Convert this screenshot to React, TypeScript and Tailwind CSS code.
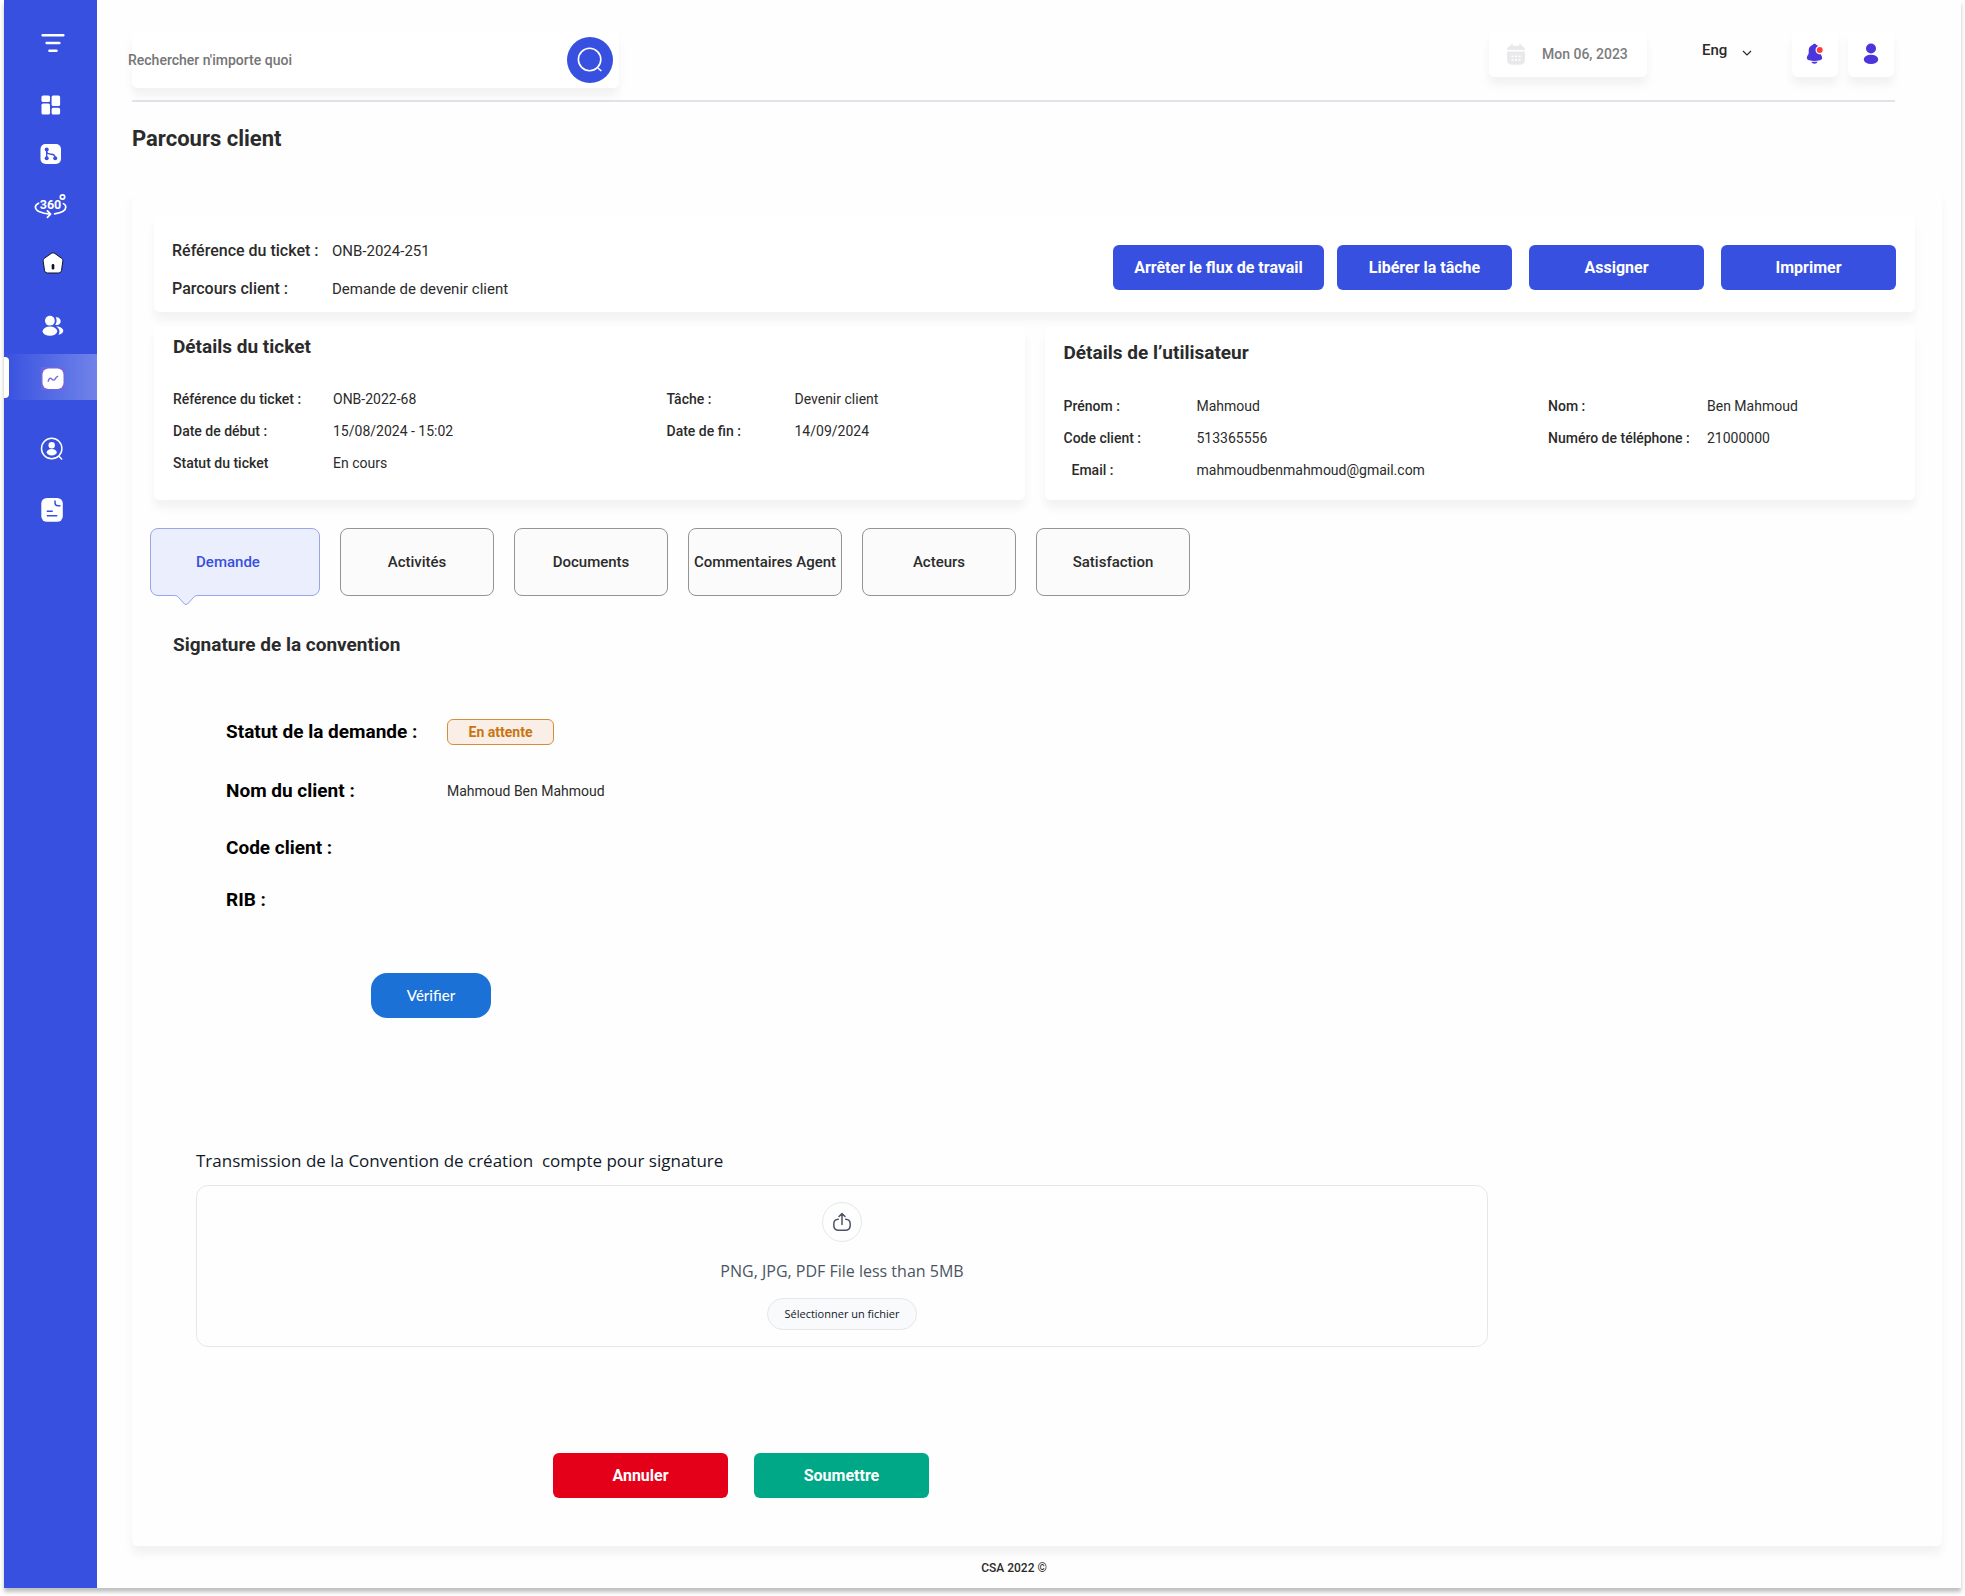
import type { ReactNode } from "react"
import clsx from "clsx"

const cardShadow = "shadow-[0_8px_10px_rgba(0,0,0,0.05)]"

interface Field {
  label: string
  value: string
  indent?: boolean
}

const ticketFields: Field[][] = [
  [
    { label: "Référence du ticket :", value: "ONB-2022-68" },
    { label: "Date de début :", value: "15/08/2024 - 15:02" },
    { label: "Statut du ticket", value: "En cours" },
  ],
  [
    { label: "Tâche :", value: "Devenir client" },
    { label: "Date de fin :", value: "14/09/2024" },
  ],
]

const userFields: Field[][] = [
  [
    { label: "Prénom :", value: "Mahmoud" },
    { label: "Code client :", value: "513365556" },
    { label: "Email :", value: "mahmoudbenmahmoud@gmail.com", indent: true },
  ],
  [
    { label: "Nom :", value: "Ben Mahmoud" },
    { label: "Numéro de téléphone :", value: "21000000" },
  ],
]

const tabs = ["Activités", "Documents", "Commentaires Agent", "Acteurs", "Satisfaction"]

function MenuIcon() {
  return (
    <svg width="24" height="20" viewBox="0 0 24 20" stroke="white" strokeWidth="2.4" strokeLinecap="round">
      <path d="M1.6 2.2h20.8M5.6 10h12.8M8.4 17.8h7.2" />
    </svg>
  )
}

function DashboardIcon() {
  return (
    <svg width="20" height="20" viewBox="0 0 20 20" fill="white">
      <rect x="0.5" y="0.5" width="8.5" height="6.5" rx="1.6" />
      <rect x="0.5" y="8.6" width="8.5" height="10.9" rx="1.6" />
      <rect x="10.6" y="0.5" width="8.5" height="10.6" rx="1.6" />
      <rect x="10.6" y="12.8" width="8.5" height="6.7" rx="1.6" />
    </svg>
  )
}

function FlowIcon() {
  return (
    <svg width="22" height="22" viewBox="0 0 22 22" fill="none">
      <rect x="0.5" y="1" width="20.5" height="20" rx="5" fill="white" />
      <path d="M6.7 6v9M6.7 7.5c0 3.5 2 3.7 4.5 3.7 2.8 0 4 1 4 4" stroke="#3850e0" strokeWidth="1.4" />
      <circle cx="6.7" cy="6.6" r="2" fill="#3850e0" />
      <circle cx="6.7" cy="15.2" r="2" fill="#3850e0" />
      <circle cx="15.2" cy="15.2" r="2" fill="#3850e0" />
    </svg>
  )
}

function RotateIcon() {
  return (
    <svg width="34" height="26" viewBox="0 0 34 26" fill="none" stroke="white" strokeWidth="1.7" strokeLinecap="round" strokeLinejoin="round">
      <path d="M4.6 10.2C2.4 11.3 1.4 12.5 1.4 14c0 3.8 6.3 6.7 14.2 7.1M13.4 17.9l3.2 3.3-3.2 3.2M29.5 10.6c1.6 1 2.3 2.1 2.3 3.4 0 3.3-4.8 5.9-11.2 6.8" />
      <circle cx="28.5" cy="4" r="2.2" />
      <text x="16.5" y="15.5" textAnchor="middle" fontSize="12.5" fontWeight="700" fill="white" stroke="none">
        360
      </text>
    </svg>
  )
}

function HomeIcon() {
  return (
    <svg width="22" height="22" viewBox="0 0 22 22">
      <path
        d="M9.2 1.4a3 3 0 0 1 3.6 0l6.7 4.800c1 .7 1.500 1.900 1.300 3l-1.300 9.300a3 3 0 0 1-3 2.500H5.500a3 3 0 0 1-3-2.500L1.200 9.200c-.2-1.100.3-2.300 1.300-3z"
        fill="white"
        stroke="#11131c"
        strokeWidth="1"
      />
      <rect x="9.7" y="12" width="2.6" height="5.5" rx="1.2" fill="#11131c" />
    </svg>
  )
}

function UsersIcon() {
  return (
    <svg width="22" height="22" viewBox="0 0 22 22" fill="white">
      <circle cx="7.9" cy="5.7" r="4.9" />
      <ellipse cx="7.9" cy="16.2" rx="7.3" ry="4.6" />
      <path d="M13.2 9.7c.9-1.1 1.4-2.500 1.400-4 0-1.300-.3-2.400-.9-3.400 2.700-.6 5 1.200 5 3.900s-2.600 4.500-5.500 3.500zM14 11.400c3.900-.2 7.300 1.900 7.300 4.400 0 2-1.900 3.600-5 4 2-2.500 1.600-6.300-2.300-8.400z" />
    </svg>
  )
}

function ActivityIcon() {
  return (
    <svg width="24" height="24" viewBox="0 0 24 24" fill="none">
      <rect width="24" height="23" fill="#7166e0" />
      <rect x="1.5" y="1.5" width="21" height="20.5" rx="6" fill="white" />
      <path d="M7 14.8c1.2-4 2.3-4.3 3.6-2.800 1.700 1.900 2.900 1.500 3.900-.6.5-1 1.100-1.900 2.700-2.300" stroke="#7166e0" strokeWidth="1.3" />
    </svg>
  )
}

function UserSearchIcon() {
  return (
    <svg width="24" height="24" viewBox="0 0 24 24" fill="white">
      <circle cx="11.7" cy="11.5" r="10.2" fill="none" stroke="white" strokeWidth="1.5" />
      <path d="M18.7 19l3.4 3.5" stroke="white" strokeWidth="1.5" />
      <circle cx="11.7" cy="8.3" r="3.2" />
      <ellipse cx="11.7" cy="15.2" rx="5" ry="3.2" />
    </svg>
  )
}

function DocumentIcon() {
  return (
    <svg width="24" height="24" viewBox="0 0 24 24" fill="none">
      <rect x="1.3" width="21.5" height="23.8" rx="5.5" fill="white" />
      <path d="M15 2.500v2.300c0 2 1 3 3 3h2.500M6.800 13.200h6M6.800 17.700h10.500" stroke="#3850e0" strokeWidth="1.5" />
    </svg>
  )
}

function CalendarIcon() {
  return (
    <svg width="18" height="22" viewBox="0 0 18 22" fill="#e9e9ec">
      <path d="M0 7c.3-2.700 2-4 4-4.200V1.300a.9.900 0 0 1 1.800 0v1.400h6.400V1.300a.9.900 0 0 1 1.800 0v1.500c2 .2 3.700 1.500 4 4.200z" />
      <path d="M0 8.500h18v8.300c0 3-1.800 5-5 5H5c-3.200 0-5-2-5-5z" />
      <path d="M4.500 13.300h2M8 13.300h2M11.500 13.300h2M4.500 17h2M8 17h2M11.500 17h2" stroke="white" strokeWidth="1.7" />
    </svg>
  )
}

function BellIcon() {
  return (
    <svg width="18" height="22" viewBox="0 0 18 22" fill="#4b35dc">
      <path d="M8.500.7c.9 0 1.400.5 1.600 1.100 2.800.9 4.200 3 4.200 5.700v2.800c0 1.500 1.900 2.500 1.900 4.500 0 1.700-1.200 2.200-2.500 2.500-3.200.8-7.200.8-10.400 0-1.300-.3-2.500-.8-2.500-2.500 0-2 1.900-3 1.900-4.500V7.500c0-2.700 1.400-4.800 4.200-5.700.2-.6.700-1.100 1.600-1.100z" />
      <path d="M5.300 18.800h6.400c-.6 1.300-1.700 2-3.200 2s-2.600-.7-3.200-2z" />
      <circle cx="13.7" cy="7" r="3.6" fill="#ff3b3b" stroke="white" strokeWidth="1.2" />
    </svg>
  )
}

function UserIcon() {
  return (
    <svg width="16" height="22" viewBox="0 0 16 22" fill="#4b35dc">
      <circle cx="8" cy="5.5" r="5" />
      <ellipse cx="8" cy="16.4" rx="7.2" ry="4.7" />
    </svg>
  )
}

function NavLink({ label, className, children }: { label: string; className: string; children: ReactNode }) {
  return (
    <a href="#" aria-label={label} className={clsx("flex w-full items-center justify-center", className)}>
      {children}
    </a>
  )
}

function Sidebar() {
  return (
    <nav className="flex w-[93px] shrink-0 flex-col items-center bg-[#3850e0] pt-[33px]">
      <button type="button" aria-label="Menu" className="ml-1">
        <MenuIcon />
      </button>
      <NavLink label="Tableau de bord" className="mt-[42px]">
        <DashboardIcon />
      </NavLink>
      <NavLink label="Flux" className="mt-[28px]">
        <FlowIcon />
      </NavLink>
      <NavLink label="Vue 360" className="mt-[28px]">
        <RotateIcon />
      </NavLink>
      <NavLink label="Accueil" className="mt-[33px] pl-1">
        <HomeIcon />
      </NavLink>
      <NavLink label="Clients" className="mt-[41px] pl-1">
        <UsersIcon />
      </NavLink>
      <div className="relative mt-[17px] flex h-[46px] w-full items-center bg-linear-to-r from-[#3850e0] to-[#7182e9]">
        <span className="absolute left-0 h-[41px] w-[5px] rounded-r bg-white" />
        <NavLink label="Parcours client" className="pt-1 pl-1">
          <ActivityIcon />
        </NavLink>
      </div>
      <NavLink label="Recherche client" className="mt-[37px] pl-0.5">
        <UserSearchIcon />
      </NavLink>
      <NavLink label="Documents" className="mt-[37px] pl-0.5">
        <DocumentIcon />
      </NavLink>
    </nav>
  )
}

function Header() {
  return (
    <header className="mr-[66px] ml-[35px] flex h-[102px] items-start border-b-2 border-[#e2e2ea] pt-[31px] pr-px">
      <form className={clsx("flex h-[57px] w-[487px] items-center rounded-md bg-white pr-1.5", cardShadow)}>
        <input
          type="search"
          aria-label="Rechercher"
          placeholder="Rechercher n'importe quoi"
          className="-ml-1 min-w-0 flex-1 bg-transparent text-sm font-medium outline-none placeholder:text-[#757575]"
        />
        <button type="button" aria-label="Lancer la recherche" className="flex size-[46px] items-center justify-center rounded-full bg-[#3850e0]">
          <svg width="26" height="26" viewBox="0 0 26 26" fill="none" stroke="white" strokeWidth="1.6">
            <circle cx="12.6" cy="12.5" r="11.2" />
            <path d="M20.800 21l3.600 3" />
          </svg>
        </button>
      </form>

      <div className={clsx("ml-auto flex h-[46px] w-[158px] items-center gap-[17px] rounded-md bg-white pl-[18px]", cardShadow)}>
        <CalendarIcon />
        <time dateTime="2023-11-06" className="text-sm font-medium text-[#7c7c7c]">
          Mon 06, 2023
        </time>
      </div>
      <label className="ml-[55px] flex h-[38px] items-center gap-3.5">
        <select aria-label="Langue" className="appearance-none bg-transparent text-[15px] font-medium text-[#2b2b2b] outline-none">
          <option>Eng</option>
        </select>
        <svg width="10" height="7" viewBox="0 0 10 7" fill="none" stroke="#2b2b2b" strokeWidth="1.2" className="mt-1.5">
          <path d="M1 1l4 4 4-4" />
        </svg>
      </label>
      <button type="button" aria-label="Notifications" className={clsx("ml-10 flex size-[46px] items-center justify-center rounded-md bg-white", cardShadow)}>
        <BellIcon />
      </button>
      <button type="button" aria-label="Profil" className={clsx("ml-2.5 flex size-[46px] items-center justify-center rounded-md bg-white", cardShadow)}>
        <UserIcon />
      </button>
    </header>
  )
}

function ActionButton({ className, children }: { className: string; children: ReactNode }) {
  return (
    <button type="button" className={clsx("h-[45px] rounded-md text-base font-bold text-white", className)}>
      {children}
    </button>
  )
}

function FieldList({ fields, className }: { fields: Field[]; className: string }) {
  return (
    <dl className={clsx("grid content-start gap-y-3 text-sm leading-5 whitespace-nowrap", className)}>
      {fields.map((field) => (
        <div key={field.label} className="col-span-2 grid grid-cols-subgrid">
          <dt className={clsx("font-medium", field.indent && "pl-2")}>{field.label}</dt>
          <dd>{field.value}</dd>
        </div>
      ))}
    </dl>
  )
}

function RequestRow({ label, className, children }: { label: string; className?: string; children?: ReactNode }) {
  return (
    <div className={clsx("flex h-6 items-center", className)}>
      <dt className="w-[221px] text-[19px] leading-6 font-bold text-black">{label}</dt>
      <dd>{children}</dd>
    </div>
  )
}

function UploadSection() {
  return (
    <section className="mt-[129px] max-w-[1334px] pl-[42px] font-['Open_Sans',sans-serif]">
      <h3 className="text-[17px] leading-7 text-[#111827]">Transmission de la Convention de création&nbsp; compte pour signature</h3>
      <div className="mt-2.5 flex flex-col items-center rounded-xl border border-[#e5e7eb] py-4">
        <span className="flex size-10 items-center justify-center rounded-full border border-[#e5e7eb]">
          <svg width="20" height="20" viewBox="0 0 20 20" fill="none" stroke="#4b5563" strokeWidth="1.5" strokeLinecap="round" strokeLinejoin="round">
            <path d="M10 12.500V1.800M7 4.500l3-3 3 3M6.300 7.200C3 7.300 1.800 8.600 1.800 12v1.300c0 3.700 1.300 5 5 5h6.400c3.700 0 5-1.300 5-5V12c0-3.400-1.200-4.700-4.500-4.800" />
          </svg>
        </span>
        <p className="mt-[17px] text-base leading-6 text-[#4b5563]">PNG, JPG, PDF File less than 5MB</p>
        <label
          htmlFor="convention-file"
          className="mt-[15px] flex h-8 w-[150px] items-center justify-center rounded-full border border-[#e5e7eb] bg-[#f9fafb] text-[11px] text-[#111827]"
        >
          Sélectionner un fichier
        </label>
        <input id="convention-file" type="file" className="sr-only" />
      </div>
    </section>
  )
}

export default function App() {
  return (
    <div className="bg-white px-1 pb-2 font-[Roboto,sans-serif] text-[#2b2b2b]">
      <div className="flex bg-[#fefefe] shadow-[0_4px_4px_rgba(0,0,0,0.25)]">
        <Sidebar />
        <div className="min-w-0 flex-1">
          <Header />
          <h1 className="mt-[23px] ml-[35px] text-[22px] leading-7 font-bold">Parcours client</h1>

          <main className={clsx("mt-[37px] mr-[19px] ml-[35px] rounded-md pt-[26px] pr-[27px] pb-12 pl-[22px]", cardShadow)}>
            <section className={clsx("flex items-start justify-between rounded-md bg-white pt-[25px] pr-[19px] pb-[13px] pl-[18px]", cardShadow)}>
              <dl className="grid grid-cols-[160px_auto] gap-y-[18px] text-[15px] leading-5">
                <dt className="text-base leading-5 font-medium">Référence du ticket :</dt>
                <dd>ONB-2024-251</dd>
                <dt className="text-base leading-5 font-medium">Parcours client :</dt>
                <dd>Demande de devenir client</dd>
              </dl>
              <div className="mt-1 flex gap-[13px]">
                <ActionButton className="w-[211px] bg-[#3850e0]">Arrêter le flux de travail</ActionButton>
                <div className="flex gap-[17px]">
                  <ActionButton className="w-[175px] bg-[#3850e0]">Libérer la tâche</ActionButton>
                  <ActionButton className="w-[175px] bg-[#3850e0]">Assigner</ActionButton>
                  <ActionButton className="w-[175px] bg-[#3850e0]">Imprimer</ActionButton>
                </div>
              </div>
            </section>

            <div className="mt-[15px] grid grid-cols-2 gap-5">
              <section className={clsx("rounded-md bg-white pt-2 pr-[18px] pb-[27px] pl-[19px]", cardShadow)}>
                <h2 className="text-[19px] leading-6 font-bold">Détails du ticket</h2>
                <div className="mt-[30px] flex justify-between">
                  <FieldList fields={ticketFields[0]} className="grid-cols-[160px_auto]" />
                  <FieldList fields={ticketFields[1]} className="grid-cols-[128px_212px]" />
                </div>
              </section>
              <section className={clsx("rounded-md bg-white pt-3.5 pr-[18px] pb-5 pl-[19px]", cardShadow)}>
                <h2 className="text-[19px] leading-6 font-bold">Détails de l’utilisateur</h2>
                <div className="mt-[31px] flex justify-between">
                  <FieldList fields={userFields[0]} className="grid-cols-[133px_auto]" />
                  <FieldList fields={userFields[1]} className="grid-cols-[159px_190px]" />
                </div>
              </section>
            </div>

            <div role="tablist" className="mt-7 -ml-1 flex gap-5 text-[15px] font-medium">
              <button type="button" role="tab" aria-selected="true" className="relative h-[68px] w-[170px] rounded-lg border border-[#98a5ef] bg-[#ebeefd] pr-3.5 text-[#3850e0]">
                Demande
                <svg width="24" height="11" viewBox="0 0 24 11" className="absolute top-full left-[23px]">
                  <path d="M0-1h24v2c-3 0-4 1-5 2.500l-5.500 6q-1.500 1-3 0L5 3.500C4 2 3 1 0 1z" fill="#ebeefd" />
                  <path d="M0 .5c3 0 4 1 5 2.500l5.500 6q1.500 1 3 0L19 3c1-1.500 2-2.500 5-2.500" fill="none" stroke="#98a5ef" />
                </svg>
              </button>
              {tabs.map((tab) => (
                <button key={tab} type="button" role="tab" aria-selected="false" className="h-[68px] w-[154px] rounded-lg border border-[#949494] bg-[#fbfbfb] whitespace-nowrap">
                  {tab}
                </button>
              ))}
            </div>

            <h2 className="mt-[37px] ml-[19px] text-[19px] leading-6 font-bold">Signature de la convention</h2>
            <dl className="mt-[63px] ml-[72px]">
              <RequestRow label="Statut de la demande :">
                <span className="flex h-[26px] w-[107px] items-center justify-center rounded-md border border-[#d98c3a] bg-[#f9efe7] text-sm font-bold text-[#c97412]">
                  En attente
                </span>
              </RequestRow>
              <RequestRow label="Nom du client :" className="mt-[35px]">
                <span className="text-sm">Mahmoud Ben Mahmoud</span>
              </RequestRow>
              <RequestRow label="Code client :" className="mt-[33px]" />
              <RequestRow label="RIB :" className="mt-[28px]" />
            </dl>
            <button type="button" className="mt-[61px] ml-[217px] block h-[45px] w-[120px] rounded-2xl bg-[#1b71d6] font-[Lato,sans-serif] text-[15px] font-medium text-white">
              Vérifier
            </button>

            <UploadSection />

            <div className="mt-[106px] ml-[399px] flex gap-[26px]">
              <ActionButton className="w-[175px] bg-[#e50019]">Annuler</ActionButton>
              <ActionButton className="w-[175px] bg-[#00a887]">Soumettre</ActionButton>
            </div>
          </main>

          <footer className="mt-3 pr-[30px] pb-2.5 text-center text-xs leading-5 font-medium">CSA 2022 ©</footer>
        </div>
      </div>
    </div>
  )
}
